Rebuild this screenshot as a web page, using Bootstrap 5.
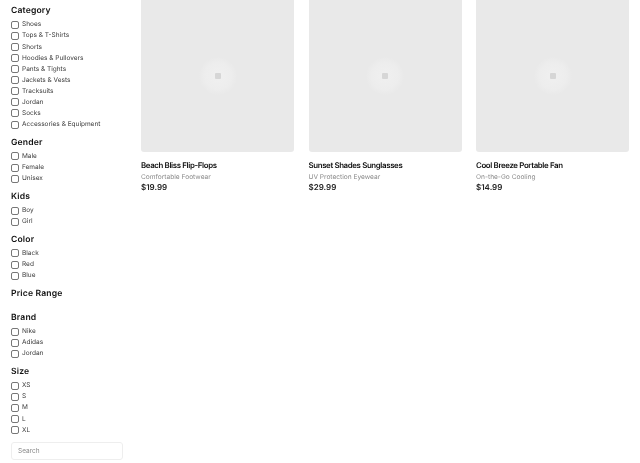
<!DOCTYPE html>
<html lang="en">
<head>
  <meta charset="UTF-8">
  <meta name="viewport" content="width=device-width, initial-scale=1.0">
  <title>Shop</title>
  <link href="https://cdn.jsdelivr.net/npm/bootstrap@5.3.0/dist/css/bootstrap.min.css" rel="stylesheet">
  <style>
    html, body { height: 463px; overflow: hidden; }
    body { font-family: Inter, "Liberation Sans", sans-serif; background: #fff; color: #111; text-rendering: geometricPrecision; }
    .shop-wrap { will-change: transform; }
    .shop-side { width: 141px; flex: none; padding: 5px 18px 0 11px; }
    .filter-title { font-size: 8.6px; line-height: 12px; font-weight: 600; letter-spacing: .15px; margin: 0 0 2.2px; color: #111; }
    .filter-group { margin-bottom: 6.6px; }
    .filter-check { display: flex; align-items: center; height: 11.1px; padding-top: 1px; font-size: 6.5px; color: #3c3c3c; margin: 0; }
    .filter-check input { appearance: none; width: 8px; height: 8px; margin: 0 3px 1px 0; border: 1px solid #777; border-radius: 2px; background: #fff; flex: none; }
    .price-gap { margin-bottom: 12px; }
    .side-search { height: 18px; font-size: 6.5px; padding: 0 6px; border: 1px solid #eee; border-radius: 3px; margin-top: 1px; }
    .side-search::placeholder { color: #888; }
    .shop-grid { flex: 1; display: grid; grid-template-columns: repeat(3, 153px); column-gap: 14.5px; align-content: start; }
    .thumb { height: 152px; background: #e9e9e9; border-radius: 0 0 3px 3px; display: flex; align-items: center; justify-content: center; }
    .thumb-glow { width: 38px; height: 38px; border-radius: 50%; background: radial-gradient(circle, #f0f0f0 0, #ededed 50%, #e9e9e9 72%); display: flex; align-items: center; justify-content: center; }
    .thumb-dot { width: 6px; height: 6px; background: #d6d6d6; border-radius: 1px; }
    .prod-name { font-size: 7.9px; line-height: 11px; font-weight: 600; letter-spacing: -.38px; color: #111; margin-top: 8px; }
    .prod-sub { font-size: 6.6px; line-height: 11px; padding-top: 1px; color: #8a8a8a; }
    .prod-price { font-size: 8px; line-height: 8px; font-weight: 600; color: #222; }
  </style>
</head>
<body>
  <div class="d-flex shop-wrap">
    <aside class="shop-side">
      <div class="filter-group">
        <h6 class="filter-title">Category</h6>
        <label class="filter-check"><input type="checkbox">Shoes</label>
        <label class="filter-check"><input type="checkbox">Tops &amp; T-Shirts</label>
        <label class="filter-check"><input type="checkbox">Shorts</label>
        <label class="filter-check"><input type="checkbox">Hoodies &amp; Pullovers</label>
        <label class="filter-check"><input type="checkbox">Pants &amp; Tights</label>
        <label class="filter-check"><input type="checkbox">Jackets &amp; Vests</label>
        <label class="filter-check"><input type="checkbox">Tracksuits</label>
        <label class="filter-check"><input type="checkbox">Jordan</label>
        <label class="filter-check"><input type="checkbox">Socks</label>
        <label class="filter-check"><input type="checkbox">Accessories &amp; Equipment</label>
      </div>
      <div class="filter-group">
        <h6 class="filter-title">Gender</h6>
        <label class="filter-check"><input type="checkbox">Male</label>
        <label class="filter-check"><input type="checkbox">Female</label>
        <label class="filter-check"><input type="checkbox">Unisex</label>
      </div>
      <div class="filter-group">
        <h6 class="filter-title">Kids</h6>
        <label class="filter-check"><input type="checkbox">Boy</label>
        <label class="filter-check"><input type="checkbox">Girl</label>
      </div>
      <div class="filter-group">
        <h6 class="filter-title">Color</h6>
        <label class="filter-check"><input type="checkbox">Black</label>
        <label class="filter-check"><input type="checkbox">Red</label>
        <label class="filter-check"><input type="checkbox">Blue</label>
      </div>
      <div class="filter-group price-gap">
        <h6 class="filter-title">Price Range</h6>
      </div>
      <div class="filter-group">
        <h6 class="filter-title">Brand</h6>
        <label class="filter-check"><input type="checkbox">Nike</label>
        <label class="filter-check"><input type="checkbox">Adidas</label>
        <label class="filter-check"><input type="checkbox">Jordan</label>
      </div>
      <div class="filter-group">
        <h6 class="filter-title">Size</h6>
        <label class="filter-check"><input type="checkbox">XS</label>
        <label class="filter-check"><input type="checkbox">S</label>
        <label class="filter-check"><input type="checkbox">M</label>
        <label class="filter-check"><input type="checkbox">L</label>
        <label class="filter-check"><input type="checkbox">XL</label>
      </div>
      <input class="form-control side-search" type="text" placeholder="Search">
    </aside>
    <main class="shop-grid">
      <div>
        <div class="thumb"><div class="thumb-glow"><div class="thumb-dot"></div></div></div>
        <div class="prod-name">Beach Bliss Flip-Flops</div>
        <div class="prod-sub">Comfortable Footwear</div>
        <div class="prod-price">$19.99</div>
      </div>
      <div>
        <div class="thumb"><div class="thumb-glow"><div class="thumb-dot"></div></div></div>
        <div class="prod-name">Sunset Shades Sunglasses</div>
        <div class="prod-sub">UV Protection Eyewear</div>
        <div class="prod-price">$29.99</div>
      </div>
      <div>
        <div class="thumb"><div class="thumb-glow"><div class="thumb-dot"></div></div></div>
        <div class="prod-name">Cool Breeze Portable Fan</div>
        <div class="prod-sub">On-the-Go Cooling</div>
        <div class="prod-price">$14.99</div>
      </div>
    </main>
  </div>
</body>
</html>
